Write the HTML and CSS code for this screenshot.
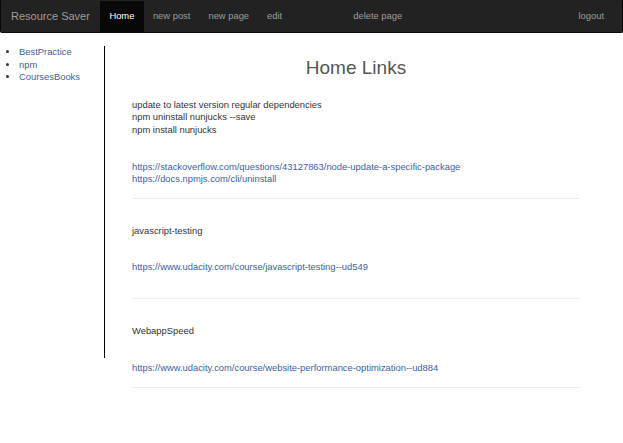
FILE: index.html
```html
<!DOCTYPE html>
<html>
<head>
<meta charset="utf-8">
<link rel="stylesheet" href="styles.css">
</head>
<body>
<nav class="navbar">
  <a class="brand" href="#">Resource Saver</a>
  <ul class="nav">
    <li class="active"><a href="#">Home</a></li>
    <li><a href="#">new post</a></li>
    <li><a href="#">new page</a></li>
    <li><a href="#">edit</a></li>
    <li class="delete"><a href="#">delete page</a></li>
  </ul>
  <ul class="nav nav-right">
    <li><a href="#">logout</a></li>
  </ul>
</nav>
<div class="page">
  <aside class="sidebar">
    <ul class="pages">
      <li><a href="#">BestPractice</a></li>
      <li><a href="#">npm</a></li>
      <li><a href="#">CoursesBooks</a></li>
    </ul>
  </aside>
  <main class="content">
    <h1 class="title">Home Links</h1>
    <section class="entry first">
      <div class="desc">update to latest version regular dependencies<br>npm uninstall nunjucks --save<br>npm install nunjucks</div>
      <div class="links"><a href="#">https://stackoverflow.com/questions/43127863/node-update-a-specific-package</a><br><a href="#">https://docs.npmjs.com/cli/uninstall</a></div>
    </section>
    <section class="entry">
      <div class="desc">javascript-testing</div>
      <div class="links"><a href="#">https://www.udacity.com/course/javascript-testing--ud549</a><br><br></div>
    </section>
    <section class="entry">
      <div class="desc">WebappSpeed</div>
      <div class="links"><a href="#">https://www.udacity.com/course/website-performance-optimization--ud884</a></div>
    </section>
  </main>
</div>
</body>
</html>
```
FILE: styles.css
```css
html, body {
  margin: 0;
  padding: 0;
  background: #fff;
}
body {
  font-family: "Liberation Sans", Arial, sans-serif;
  font-size: 9.4px;
  color: #333;
  line-height: 12.4px;
}
a {
  color: #3d5ea6;
  text-decoration: none;
}
.navbar {
  display: flex;
  align-items: stretch;
  height: 31px;
  background: #222;
  border: 1px solid #080808;
  border-top-color: #222;
  border-radius: 0 0 2px 2px;
}
.brand {
  display: flex;
  align-items: center;
  padding: 0 10px;
  font-size: 11px;
  color: #9d9d9d;
  white-space: nowrap;
}
.nav {
  display: flex;
  list-style: none;
  margin: 0;
  padding: 0;
}
.nav li {
  display: flex;
}
.nav a {
  display: flex;
  align-items: center;
  padding: 0 9px;
  color: #9d9d9d;
  white-space: nowrap;
}
.nav .active a {
  background: #080808;
  color: #fff;
  padding: 0 9.5px;
}
.nav .delete {
  margin-left: 53px;
}
.nav-right {
  margin-left: auto;
  margin-right: 9px;
}
.page {
  display: flex;
  align-items: flex-start;
  margin-top: 13px;
}
.sidebar {
  width: 104px;
  height: 312px;
  border-right: 1px solid #000;
  flex: none;
}
.pages {
  margin: 0;
  padding: 0 0 0 19px;
  line-height: 12.6px;
}
.content {
  width: 448px;
  margin-left: 27px;
}
.title {
  margin: 11px 0 0;
  font-size: 19px;
  font-weight: normal;
  line-height: 22px;
  text-align: center;
  color: #555;
}
.entry {
  padding-top: 26px;
  padding-bottom: 12px;
  border-bottom: 1px solid #eee;
}
.entry.first {
  padding-top: 20px;
}
.links {
  margin-top: 24.5px;
}
```
